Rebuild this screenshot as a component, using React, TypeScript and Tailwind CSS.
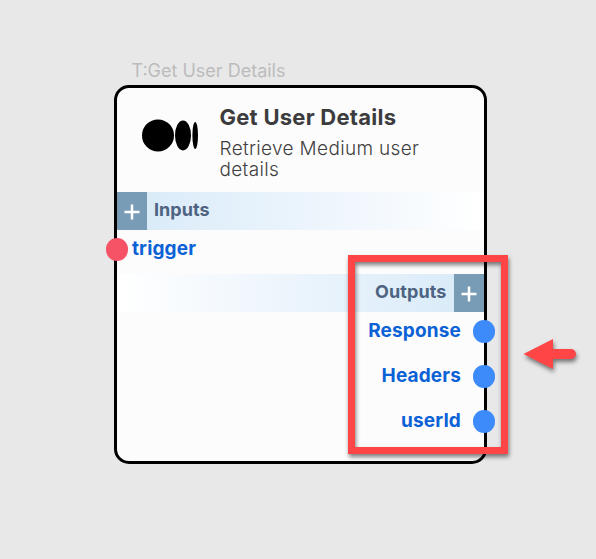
import React from "react";

function PlusBox() {
  return (
    <div className="flex h-full w-[30px] shrink-0 items-center justify-center bg-[#789bb6] pt-[3px]">
      <svg width="16" height="16" viewBox="0 0 16 16" aria-hidden="true">
        <path d="M8 0.5V15.5M0.5 8H15.5" stroke="#fff" strokeWidth="2.5" />
      </svg>
    </div>
  );
}

function OutputRow({ label }: { label: string }) {
  return (
    <div className="-mr-[11.5px] flex h-[45px] items-center justify-end gap-[11.5px]">
      <span className="-mt-[1px] text-[19px] leading-6 font-bold tracking-[0.15px] text-[#0b62d6]">{label}</span>
      <span className="size-[22.5px] shrink-0 rounded-full bg-[#3d8bfb]" />
    </div>
  );
}

export default function App() {
  return (
    <main className="relative h-[559px] w-[596px] overflow-hidden bg-[#e8e8e8] pt-[60px] pl-[113.5px] font-['Inter',sans-serif]">
      <div className="h-[25px] pl-[18px] text-[18px] leading-[22px] font-normal text-[#bcbcbc]">T:Get User Details</div>
      <section className="h-[378.5px] w-[373px] rounded-[15px] border-[3px] border-black bg-[#fcfcfc]">
        <header className="flex h-[104px] pl-[25.5px]">
          <svg className="mt-[31px] h-[33px] w-[57px] shrink-0" viewBox="0 0 57 33" aria-label="Medium">
            <ellipse cx="16" cy="16.4" rx="16" ry="16" />
            <ellipse cx="41" cy="16.4" rx="8" ry="15" />
            <ellipse cx="53.2" cy="16.4" rx="2.8" ry="13.5" />
          </svg>
          <div className="ml-[20.5px] pt-[15px]">
            <h1 className="text-[22px] leading-[28px] font-bold tracking-[0.25px] text-[#3c3c3e]">Get User Details</h1>
            <p className="mt-[7px] w-[220px] text-[19px] leading-[21px] font-light tracking-[0.33px] text-[#3f3f41]">Retrieve Medium user details</p>
          </div>
        </header>
        <div className="flex h-[37.5px] bg-linear-to-r from-[#d7eaf8] via-[#ebf4fc] to-white">
          <PlusBox />
          <span className="pt-[6px] pl-[7.5px] text-[18px] leading-6 font-bold tracking-[0.05px] text-[#4e6381]">Inputs</span>
        </div>
        <div className="-ml-[11px] flex h-[44.5px] items-center gap-[4px] pb-[5px]">
          <span className="size-[22.5px] rounded-full bg-[#f75366]" />
          <span className="-mt-[1px] text-[19px] leading-6 font-bold tracking-[0.15px] text-[#0b62d6]">trigger</span>
        </div>
        <div className="flex h-[37.5px] justify-end bg-linear-to-l from-[#d7eaf8] via-[#ebf4fc] to-white">
          <span className="pt-[6px] pr-[7px] text-[18px] leading-6 font-bold tracking-[0.1px] text-[#4e6381]">Outputs</span>
          <PlusBox />
        </div>
        <div className="-mt-[2.6px]">
          <OutputRow label="Response" />
          <OutputRow label="Headers" />
          <OutputRow label="userId" />
        </div>
      </section>
      <div className="absolute top-[255px] left-[348px] h-[199px] w-[160px] border-[7px] border-[#ff4545] [filter:drop-shadow(1px_3px_2px_rgba(0,0,0,0.5))]" />
      <svg className="absolute top-[330px] left-[515px] [filter:drop-shadow(1px_3px_2px_rgba(0,0,0,0.5))]" width="70" height="50" viewBox="515 330 70 50" aria-hidden="true">
        <path d="M523.5 354L553 339V349H571A5 5 0 0 1 571 359H553V369Z" fill="#ff4545" />
      </svg>
    </main>
  );
}
